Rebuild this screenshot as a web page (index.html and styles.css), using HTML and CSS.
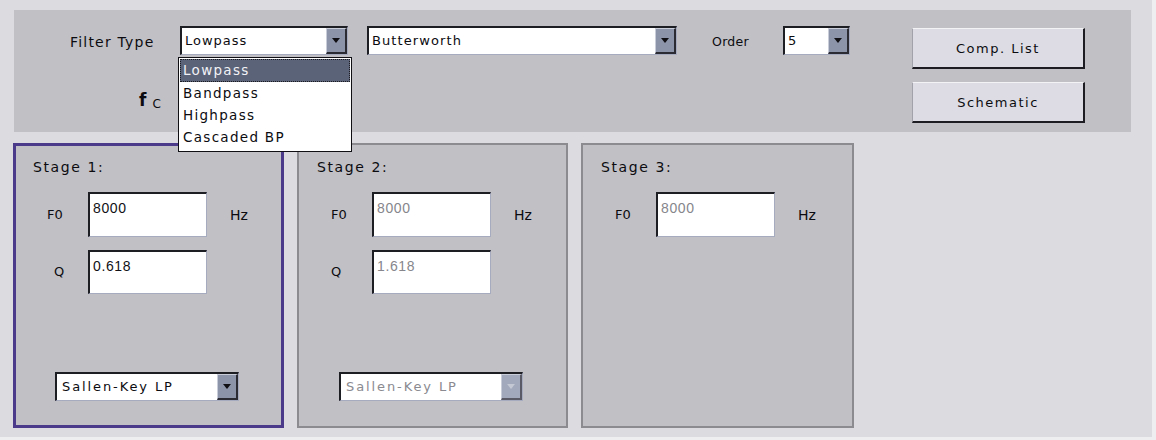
FILE: index.html
```html
<!DOCTYPE html>
<html>
<head>
<meta charset="utf-8">
<link rel="stylesheet" href="styles.css">
</head>
<body>
<div class="app">
  <div class="top-panel">
    <div class="controls">
      <div class="row1">
        <span class="lbl ft-label">Filter Type</span>
        <div class="select open w-type">
          <span class="sel-text">Lowpass</span>
          <span class="sel-btn"><i class="tri"></i></span>
          <ul class="dropdown">
            <li class="selected">Lowpass</li>
            <li>Bandpass</li>
            <li>Highpass</li>
            <li>Cascaded BP</li>
          </ul>
        </div>
        <div class="select w-family">
          <span class="sel-text tight">Butterworth</span>
          <span class="sel-btn"><i class="tri"></i></span>
        </div>
        <span class="lbl order-label">Order</span>
        <div class="select w-order">
          <span class="sel-text">5</span>
          <span class="sel-btn"><i class="tri"></i></span>
        </div>
      </div>
      <div class="row2">
        <span class="fc"><b class="f">f</b><span class="c">C</span></span>
      </div>
    </div>
    <div class="buttons">
      <button class="btn">Comp. List</button>
      <button class="btn">Schematic</button>
    </div>
  </div>

  <div class="stages">
    <div class="stage active">
      <div class="stage-title">Stage 1:</div>
      <div class="fields">
        <span class="lbl f-lbl">F0</span>
        <div class="input"><span>8000</span></div>
        <span class="lbl hz">Hz</span>
        <span class="lbl f-lbl q-indent">Q</span>
        <div class="input"><span>0.618</span></div>
        <span></span>
      </div>
      <div class="select w-topo">
        <span class="sel-text wide">Sallen-Key LP</span>
        <span class="sel-btn"><i class="tri"></i></span>
      </div>
    </div>

    <div class="stage">
      <div class="stage-title">Stage 2:</div>
      <div class="fields">
        <span class="lbl f-lbl">F0</span>
        <div class="input dim"><span>8000</span></div>
        <span class="lbl hz">Hz</span>
        <span class="lbl f-lbl">Q</span>
        <div class="input dim"><span>1.618</span></div>
        <span></span>
      </div>
      <div class="select w-topo disabled">
        <span class="sel-text wide">Sallen-Key LP</span>
        <span class="sel-btn"><i class="tri"></i></span>
      </div>
    </div>

    <div class="stage wide-stage">
      <div class="stage-title">Stage 3:</div>
      <div class="fields">
        <span class="lbl f-lbl">F0</span>
        <div class="input dim"><span>8000</span></div>
        <span class="lbl hz">Hz</span>
      </div>
    </div>
  </div>
</div>
</body>
</html>
```

FILE: styles.css
```css
* { box-sizing: border-box; }

body {
  margin: 0;
  background: #eeeef0;
  font-family: "DejaVu Sans", Verdana, sans-serif;
  font-size: 13px;
  color: #0c0c10;
}

.app {
  width: 1152px;
  height: 437px;
  background: #dcdbe0;
  padding-top: 10px;
  overflow: hidden;
}

.top-panel {
  margin-left: 14px;
  width: 1117px;
  height: 122px;
  background: #c1c0c5;
  padding-top: 16px;
  display: flex;
  align-items: flex-start;
}

.controls {
  display: flex;
  flex-direction: column;
}

.row1 {
  display: flex;
  align-items: center;
  height: 29px;
}

.lbl {
  font-size: 14px;
  letter-spacing: 1.2px;
  line-height: 16px;
  white-space: nowrap;
}

.ft-label {
  margin-left: 56px;
  margin-top: 3px;
  width: 110px;
  letter-spacing: 1.2px;
}

.order-label {
  margin-left: 35px;
  margin-top: 3px;
  width: 71px;
  font-size: 12.5px;
  letter-spacing: 0.3px;
}

/* select box */
.select {
  display: flex;
  height: 29px;
  background: #ffffff;
  border-top: 2px solid #1d1d24;
  border-left: 2px solid #1d1d24;
  border-right: 1px solid #a6abc0;
  border-bottom: 1px solid #a6abc0;
  position: relative;
}

.sel-text {
  flex: 1;
  padding-left: 3px;
  line-height: 25px;
  letter-spacing: 1px;
  white-space: nowrap;
  overflow: hidden;
}

.sel-text.tight { letter-spacing: 1.1px; }
.sel-text.wide { padding-left: 5px; letter-spacing: 1.9px; }

.sel-btn {
  width: 21px;
  background: #8c94aa;
  border-top: 1px solid #c9cdd9;
  border-left: 1px solid #c9cdd9;
  border-right: 2px solid #2b2b34;
  border-bottom: 2px solid #2b2b34;
  display: flex;
  align-items: center;
  justify-content: center;
}

.tri {
  width: 0;
  height: 0;
  border-left: 4px solid transparent;
  border-right: 4px solid transparent;
  border-top: 5px solid #101014;
}

.w-type { width: 168px; }
.w-family { width: 310px; margin-left: 19px; }
.w-order { width: 67px; }
.w-topo { width: 184px; margin-left: 40px; margin-top: 78px; }

.select.disabled .sel-text { color: #8a8a90; }
.select.disabled .sel-btn { background: #a2a9bc; border-right-color: #5a5a66; border-bottom-color: #5a5a66; }
.select.disabled .tri { border-top-color: #c4c8d4; }

/* open dropdown list */
.dropdown {
  position: absolute;
  left: -4px;
  top: 29px;
  width: 174px;
  margin: 0;
  padding: 1px 1px 3px;
  list-style: none;
  background: #ffffff;
  border: 1px solid #101014;
  z-index: 5;
}

.dropdown li {
  height: 22px;
  line-height: 22px;
  padding-left: 3px;
  letter-spacing: 1.3px;
  font-size: 13.5px;
}

.dropdown li.selected {
  background: #5b6378;
  color: #f2f2f6;
  outline: 1px dotted #1a1a20;
  outline-offset: -1px;
  height: 23px;
}

.row2 {
  margin-top: 36px;
  padding-left: 125px;
}

.fc {
  display: inline-flex;
  align-items: flex-start;
}

.fc .f {
  font-size: 17px;
  line-height: 18px;
  font-weight: bold;
}

.fc .c {
  font-size: 12px;
  line-height: 14px;
  margin-left: 6px;
  margin-top: 6px;
  letter-spacing: 1px;
}

/* buttons */
.buttons {
  margin-left: 62px;
  margin-top: 2px;
  display: flex;
  flex-direction: column;
  gap: 13px;
}

.btn {
  width: 173px;
  height: 41px;
  background: #dddce4;
  border-top: 1px solid #f3f3f6;
  border-left: 1px solid #a2a2aa;
  border-right: 2px solid #1c1c22;
  border-bottom: 2px solid #1c1c22;
  font-family: "DejaVu Sans", Verdana, sans-serif;
  font-size: 13px;
  letter-spacing: 1.5px;
  color: #0c0c10;
  padding: 0;
}

/* stages */
.stages {
  display: flex;
  margin-top: 11px;
  padding-left: 13px;
  gap: 13px;
}

.stage {
  width: 271px;
  height: 285px;
  background: #c1c0c5;
  border: 2px solid #8b8b90;
  padding: 14px 0 0 0;
}

.stage.wide-stage { width: 273px; }

.stage.active {
  border-color: #4b3a8a;
  box-shadow: inset 0 0 0 1px #4b3a8a;
}

.stage-title {
  padding-left: 18px;
  font-size: 14px;
  line-height: 16px;
  letter-spacing: 1.6px;
}

.fields {
  display: grid;
  grid-template-columns: 41px 119px auto;
  grid-template-rows: 45px 44px;
  row-gap: 13px;
  align-items: center;
  margin-top: 17px;
  padding-left: 32px;
}

.f-lbl { font-size: 13px; letter-spacing: 0; }
.q-indent { padding-left: 7px; }
.hz { margin-left: 23px; letter-spacing: 0; }

.input {
  height: 100%;
  background: #ffffff;
  border-top: 2px solid #1d1d24;
  border-left: 2px solid #1d1d24;
  border-right: 1px solid #a6abc0;
  border-bottom: 1px solid #a6abc0;
  padding: 6px 0 0 3px;
  font-family: "Liberation Sans", Arial, sans-serif;
  font-size: 14px;
  line-height: 16px;
  letter-spacing: 0.6px;
  color: #111116;
}

.input.dim { color: #86868c; }
```
